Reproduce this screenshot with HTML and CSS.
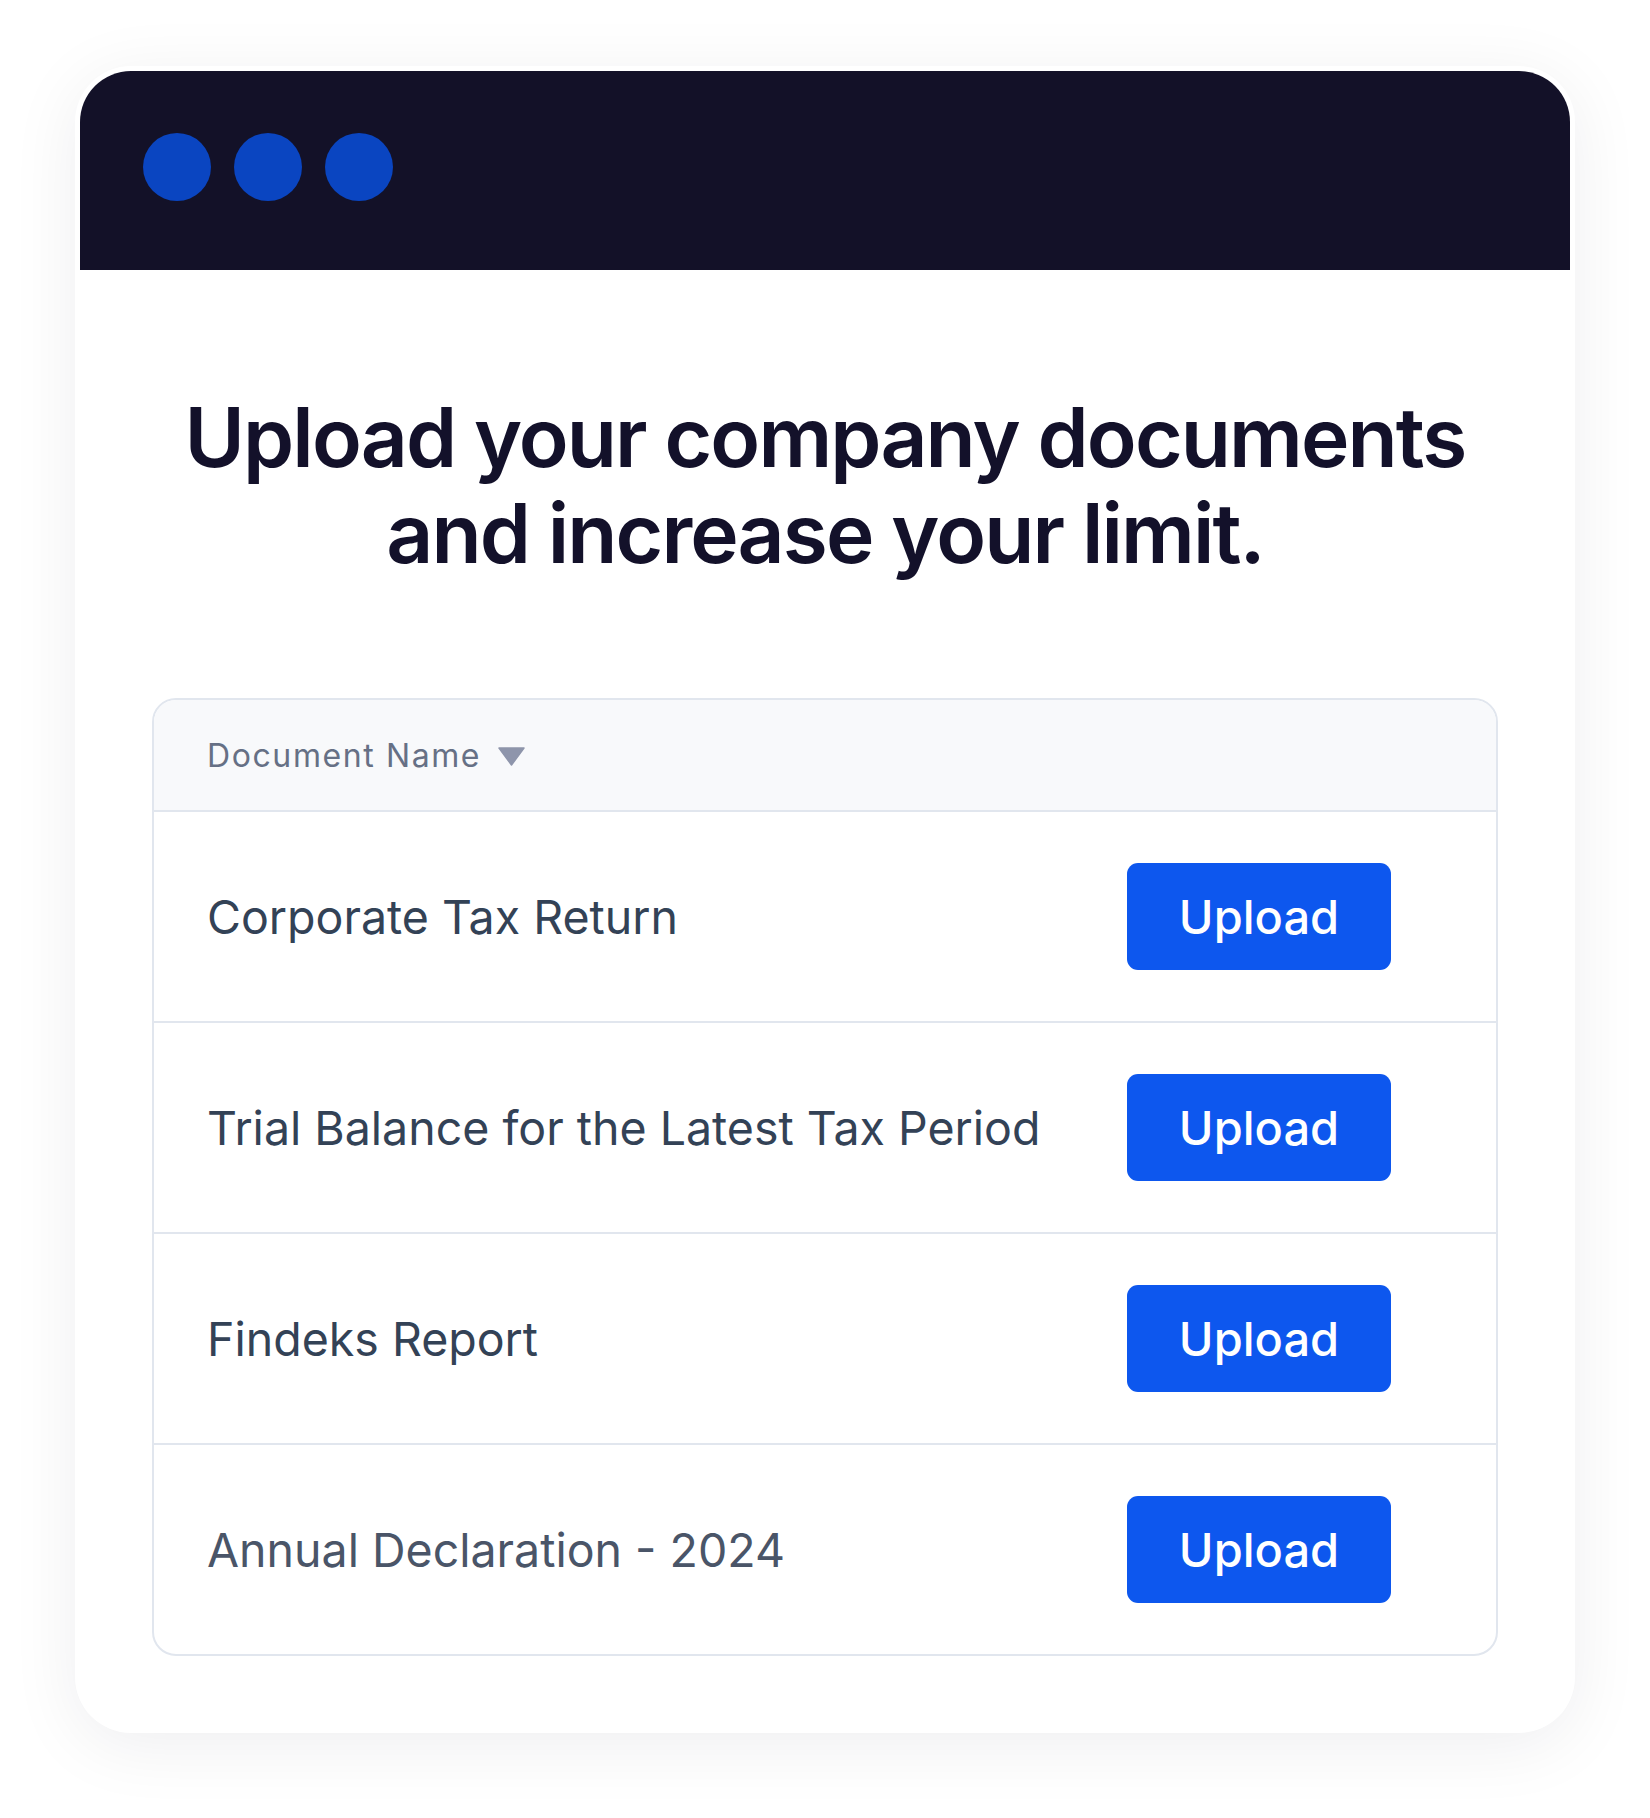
FILE: index.html
```html
<!DOCTYPE html>
<html lang="en">
<head>
<meta charset="utf-8">
<title>Upload documents</title>
<link rel="stylesheet" href="styles.css">
</head>
<body>
<div class="card">
  <div class="topbar">
    <span class="dot"></span><span class="dot"></span><span class="dot"></span>
  </div>
  <div class="content">
    <h1 class="title">Upload your company documents<br>and increase your limit.</h1>
    <div class="table">
      <div class="thead">
        <span class="th-label">Document Name</span>
        <svg class="caret" width="27" height="19" viewBox="0 0 27 19"><path d="M1 1 H26 L13.5 18 Z" fill="#8e95ab" stroke="#8e95ab" stroke-width="1.5" stroke-linejoin="round"/></svg>
      </div>
      <div class="row"><span class="doc">Corporate Tax Return</span><button class="btn">Upload</button></div>
      <div class="row"><span class="doc">Trial Balance for the Latest Tax Period</span><button class="btn">Upload</button></div>
      <div class="row"><span class="doc">Findeks Report</span><button class="btn">Upload</button></div>
      <div class="row"><span class="doc doc-light">Annual Declaration - 2024</span><button class="btn">Upload</button></div>
    </div>
  </div>
</div>
</body>
</html>
```

FILE: styles.css
```css
html, body {
  margin: 0;
  padding: 0;
  background: #ffffff;
}
body {
  width: 1650px;
  min-height: 1818px;
  font-family: Inter, "Noto Sans", sans-serif;
}
.card {
  width: 1500px;
  margin: 66px auto 0;
  background: #ffffff;
  border-radius: 56px;
  box-shadow: 0 12px 70px rgba(20, 20, 40, 0.07);
  overflow: hidden;
  padding-top: 5px;
}
.topbar {
  margin: 0 5px;
  height: 199px;
  box-sizing: border-box;
  padding: 0 0 7px 63px;
  background: #131128;
  border-radius: 51px 51px 0 0;
  display: flex;
  align-items: center;
  gap: 23px;
}
.dot {
  width: 68px;
  height: 68px;
  border-radius: 50%;
  background: #0a45c1;
}
.content {
  padding: 120px 77px 77px;
}
.title {
  margin: 0;
  text-align: center;
  font-family: Inter, sans-serif;
  font-weight: 600;
  font-size: 82px;
  line-height: 96px;
  letter-spacing: -1.9px;
  color: #13112a;
}
.table {
  margin-top: 116px;
  border: 2px solid #e1e6ee;
  border-radius: 24px;
  overflow: hidden;
}
.thead {
  height: 110px;
  background: #f8f9fb;
  display: flex;
  align-items: center;
  padding-left: 53px;
  gap: 17px;
}
.th-label {
  font-size: 32px;
  color: #667085;
  letter-spacing: 1.6px;
}
.caret {
  display: block;
  margin-top: 2px;
}
.row {
  height: 209px;
  border-top: 2px solid #e1e6ee;
  display: flex;
  align-items: center;
  justify-content: space-between;
  padding: 0 105px 0 53px;
}
.doc {
  font-size: 46.5px;
  color: #334256;
}
.doc-light {
  color: #4a5568;
}
.btn {
  width: 264px;
  height: 107px;
  border: none;
  border-radius: 11px;
  background: #0d57ee;
  color: #ffffff;
  font-family: Inter, sans-serif;
  font-size: 47px;
  font-weight: 500;
  padding: 0;
}
```
